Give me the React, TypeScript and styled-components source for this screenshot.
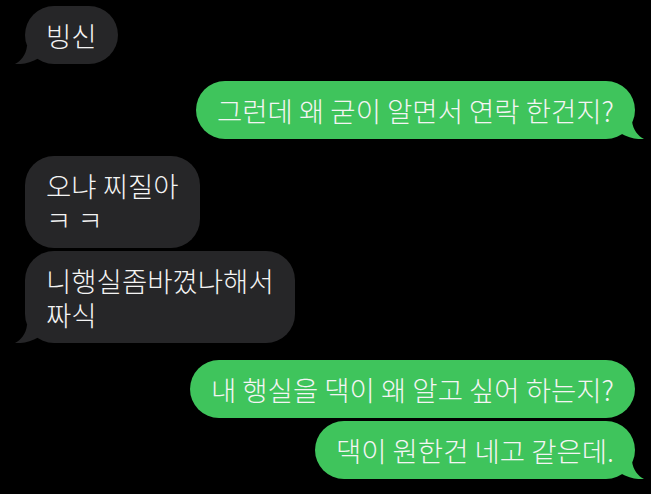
import React from "react";
import styled, { createGlobalStyle } from "styled-components";

const Global = createGlobalStyle`
  html, body { margin: 0; padding: 0; background: #000; }
  body { font-family: "Noto Sans CJK KR", "Noto Sans", sans-serif; }
`;

const Thread = styled.div`
  width: 651px;
  height: 494px;
  box-sizing: border-box;
  background: #000;
  padding: 6px 16px 0 25px;
  display: flex;
  flex-direction: column;
  gap: 17px;
  overflow: hidden;
`;

const Group = styled.div<{ $out?: boolean }>`
  display: flex;
  flex-direction: column;
  align-items: ${(p) => (p.$out ? "flex-end" : "flex-start")};
  gap: 3px;
`;

const Bubble = styled.div<{ $out?: boolean }>`
  position: relative;
  background: ${(p) => (p.$out ? "#3fc45c" : "#262628")};
  color: #f4f4f4;
  font-size: 27.5px;
  font-weight: 300;
  line-height: 34px;
  padding: 12px 21px 12px 21px;
  border-radius: 29px;
  white-space: pre-line;
`;

const Tail = styled.svg<{ $out?: boolean }>`
  position: absolute;
  bottom: 0;
  width: 25px;
  height: 18px;
  ${(p) => (p.$out ? "right: -9px; transform: scaleX(-1);" : "left: -10px;")}
`;

function BubbleTail({ out }: { out?: boolean }) {
  return (
    <Tail $out={out} viewBox="0 0 25 18">
      <path
        d="M12 0 C 11 9, 6 15, 0 18 C 8 18.5, 15 17, 24 12 L 24 0 Z"
        fill={out ? "#3fc45c" : "#262628"}
      />
    </Tail>
  );
}

type Msg = { text: string; tail?: boolean };

function Msgs({ out, items }: { out?: boolean; items: Msg[] }) {
  return (
    <Group $out={out}>
      {items.map((m, i) => (
        <Bubble key={i} $out={out}>
          {m.text}
          {m.tail && <BubbleTail out={out} />}
        </Bubble>
      ))}
    </Group>
  );
}

export default function App() {
  return (
    <>
      <Global />
      <Thread>
        <Msgs items={[{ text: "빙신", tail: true }]} />
        <Msgs out items={[{ text: "그런데 왜 굳이 알면서 연락 한건지?", tail: true }]} />
        <Msgs
          items={[
            { text: "오냐 찌질아\nㅋ ㅋ" },
            { text: "니행실좀바꼈나해서\n짜식", tail: true },
          ]}
        />
        <Msgs
          out
          items={[
            { text: "내 행실을 댁이 왜 알고 싶어 하는지?" },
            { text: "댁이 원한건 네고 같은데.", tail: true },
          ]}
        />
      </Thread>
    </>
  );
}
